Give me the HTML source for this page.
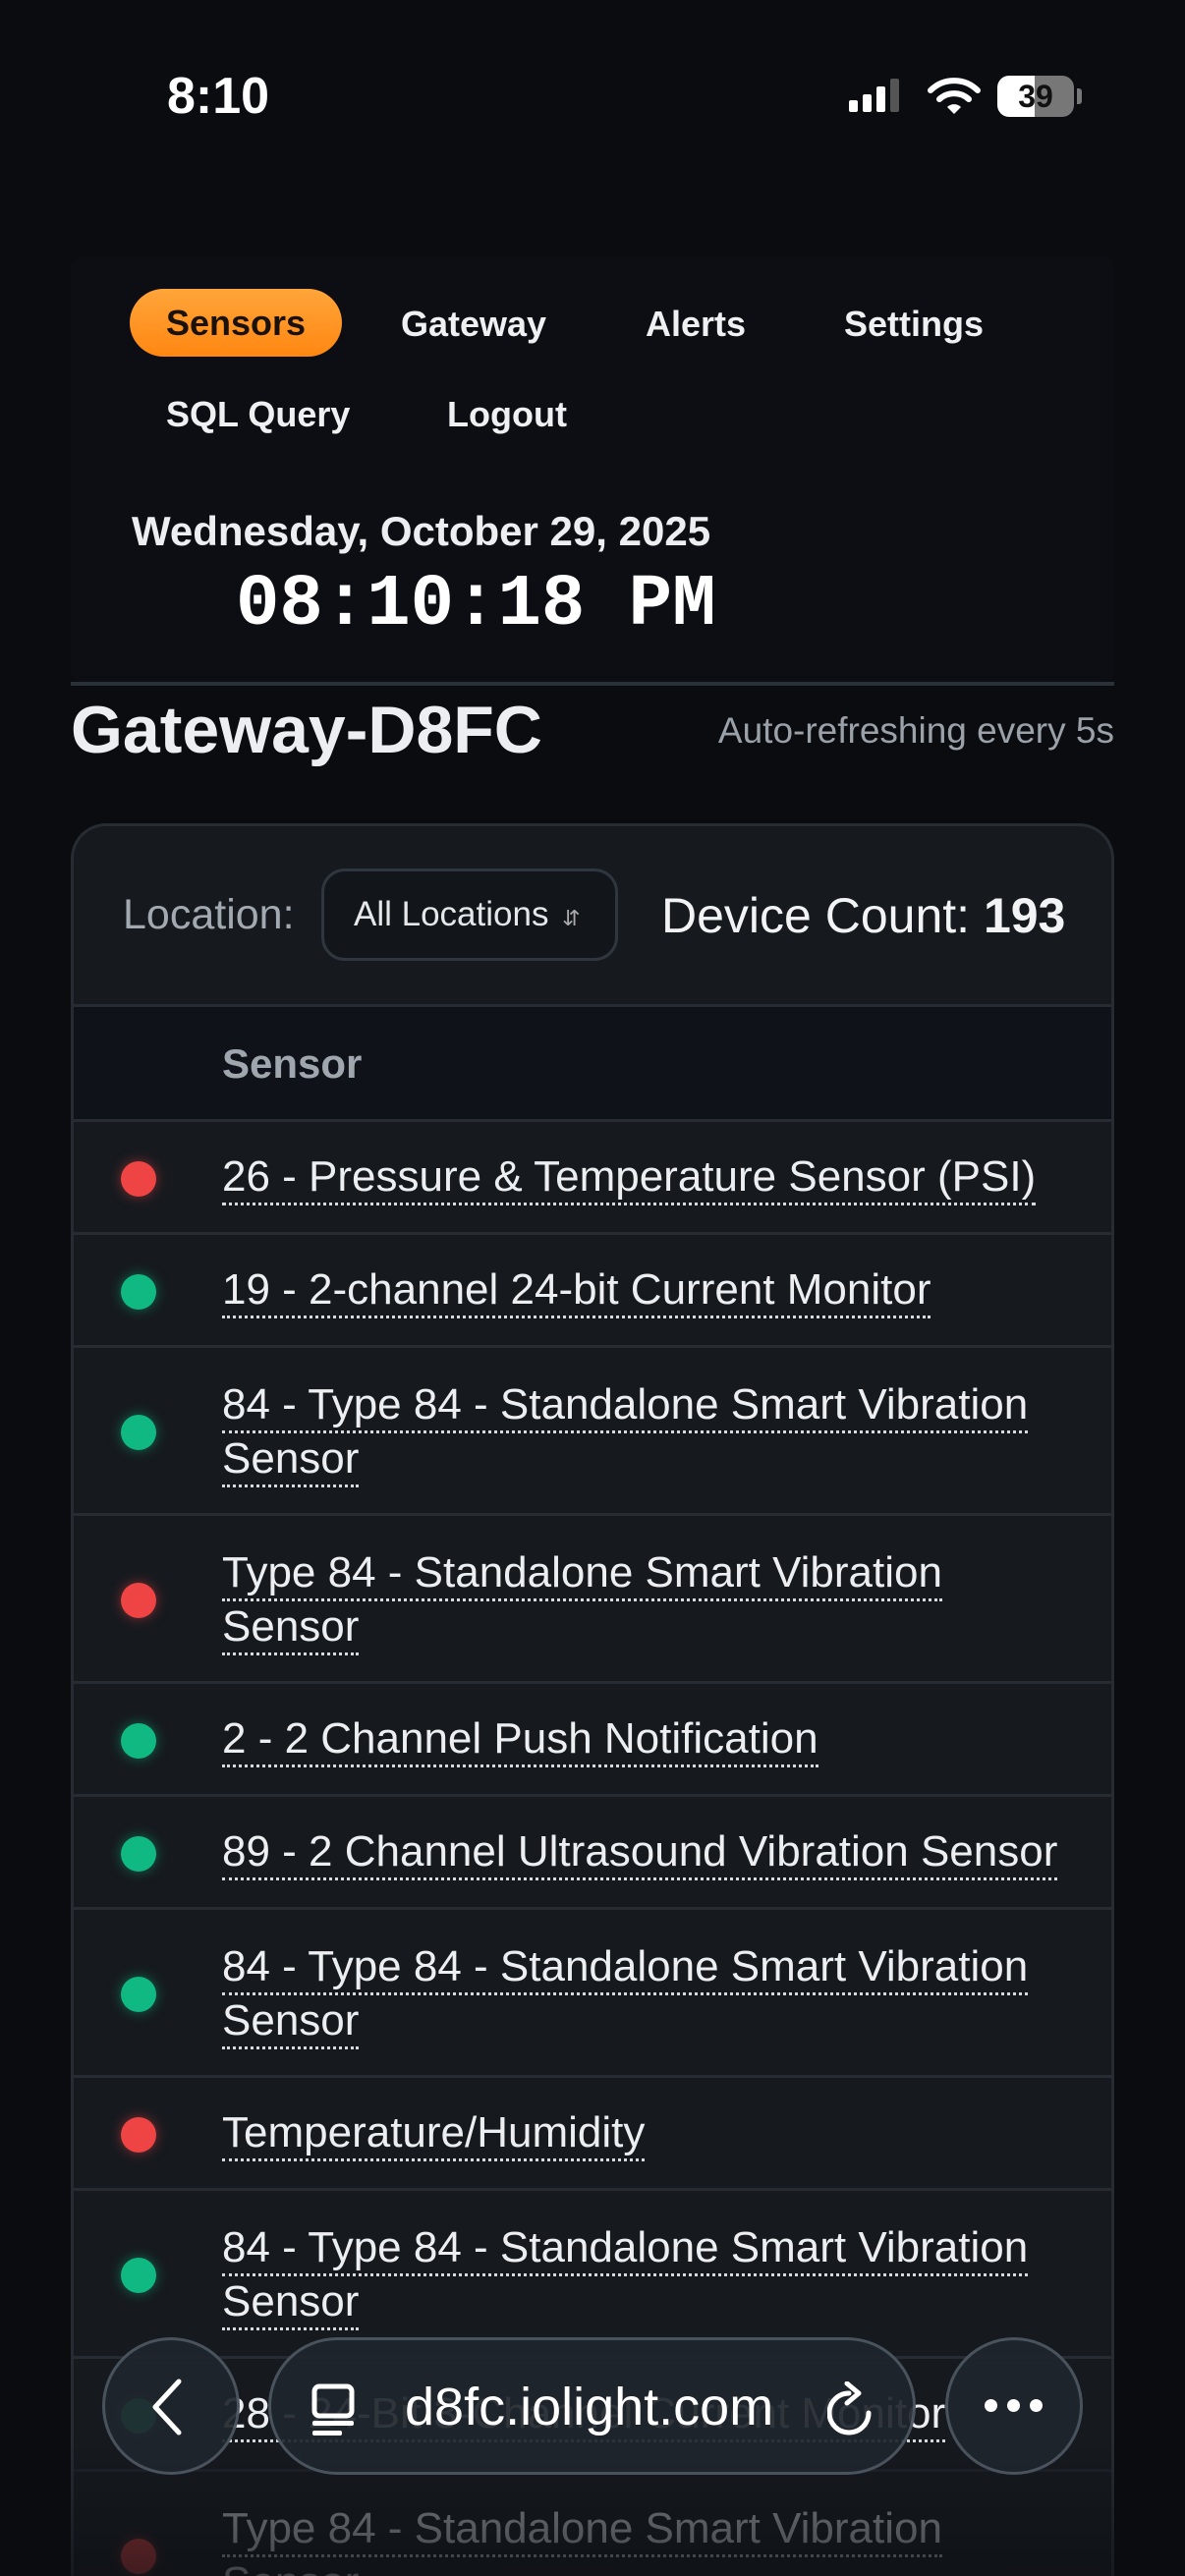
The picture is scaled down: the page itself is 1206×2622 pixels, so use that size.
<!DOCTYPE html>
<html><head><meta charset="utf-8"><style>
*{margin:0;padding:0;box-sizing:border-box}
html,body{width:1206px;height:2622px;overflow:hidden;background:#0a0c10;font-family:"Liberation Sans",sans-serif;color:#e9ebee}
body{position:relative}
.abs{position:absolute}
.nav{position:absolute;left:72px;top:262px;width:1062px;height:432px;background:#0c0e13;border-radius:10px}
.pill{position:absolute;left:132px;top:294px;width:216px;height:69px;border-radius:35px;background:linear-gradient(180deg,#ffa53a,#ff8712);color:#1a1208;font-weight:bold;font-size:36px;line-height:69px;text-align:center}
.nl{position:absolute;font-weight:bold;font-size:36px;color:#eef0f2;line-height:40px}
.card{position:absolute;left:72px;top:838px;width:1062px;height:1784px;background:#161a1f;border:3px solid #272c33;border-bottom:none;border-radius:36px 36px 0 0;overflow:hidden}
.row{position:relative;border-top:3px solid #272c33;height:115px}
.row.d{height:171px}
.dot{position:absolute;left:48px;width:36px;height:36px;border-radius:50%}
.g{background:#10b981;box-shadow:0 0 12px rgba(16,185,129,.5)}
.r{background:#ef4444;box-shadow:0 0 12px rgba(239,68,68,.5)}
.t{position:absolute;left:151px;font-size:44px;line-height:55px;color:#eceef1;width:880px}
.t span{border-bottom:3px dotted #d8dade;padding-bottom:2px}
.btn{position:absolute;top:2379px;height:140px;background:rgba(32,37,44,.92);border:3px solid rgba(110,122,135,.55);border-radius:70px}
</style></head><body>
<div class="abs" style="left:170px;top:68px;font-size:52px;font-weight:bold;color:#fff">8:10</div>
<svg class="abs" style="left:862px;top:80px" width="60" height="36"><rect x="2" y="22" width="9" height="12" rx="2" fill="#fff"/><rect x="16" y="16" width="9" height="18" rx="2" fill="#fff"/><rect x="30" y="8" width="9" height="26" rx="2" fill="#fff"/><rect x="44" y="0" width="9" height="34" rx="2" fill="#555"/></svg>
<svg class="abs" style="left:944px;top:78px" width="54" height="40" viewBox="0 0 54 40"><path d="M3 14 A34 34 0 0 1 51 14" stroke="#fff" stroke-width="6" fill="none" stroke-linecap="round"/><path d="M12 23 A22 22 0 0 1 42 23" stroke="#fff" stroke-width="6" fill="none" stroke-linecap="round"/><path d="M20 31 L27 38 L34 31 A10 10 0 0 0 20 31Z" fill="#fff"/></svg>
<div class="abs" style="left:1015px;top:77px;width:78px;height:42px;border-radius:12px;background:linear-gradient(90deg,#fff 0,#fff 38px,#777 38px);color:#111;font-weight:bold;font-size:32px;line-height:42px;text-align:center">39</div>
<div class="abs" style="left:1096px;top:90px;width:5px;height:16px;border-radius:0 3px 3px 0;background:#777"></div>

<div class="nav"></div>
<div class="pill">Sensors</div>
<div class="nl" style="left:408px;top:310px">Gateway</div>
<div class="nl" style="left:657px;top:310px">Alerts</div>
<div class="nl" style="left:859px;top:310px">Settings</div>
<div class="nl" style="left:169px;top:402px">SQL Query</div>
<div class="nl" style="left:455px;top:402px">Logout</div>
<div class="abs" style="left:134px;top:517px;font-size:42px;font-weight:bold;color:#eceef1">Wednesday, October 29, 2025</div>
<div class="abs" style="left:240px;top:572px;font-family:'Liberation Mono',monospace;font-size:74px;font-weight:bold;color:#fff;line-height:88px">08:10:18 PM</div>
<div class="abs" style="left:72px;top:694px;width:1062px;height:4px;background:#2b3139"></div>
<div class="abs" style="left:72px;top:704px;font-size:68px;font-weight:bold;color:#eceef1;line-height:78px">Gateway-D8FC</div>
<div class="abs" style="right:72px;top:722px;font-size:37px;color:#9ba1a9;line-height:44px">Auto-refreshing every 5s</div>

<div class="card">
 <div style="height:181px;position:relative">
  <div class="abs" style="left:50px;top:66px;font-size:43px;color:#a3a9b0">Location:</div>
  <div class="abs" style="left:252px;top:43px;width:302px;height:94px;border:3px solid #30363e;border-radius:24px;background:#12161b;font-size:35px;line-height:88px;padding-left:30px;color:#e5e7ea;white-space:nowrap">All Locations <span style="font-size:22px;color:#aaa;margin-left:4px">&#8693;</span></div>
  <div class="abs" style="left:598px;top:62px;font-size:50px;color:#f2f3f5;white-space:nowrap">Device Count: <b>193</b></div>
 </div>
 <div class="row" style="background:#0f1319;height:117px"><div class="abs" style="left:151px;top:34px;font-size:42px;font-weight:bold;color:#a0a6ae">Sensor</div></div>
 <div class="row"><div class="dot r" style="top:40px"></div><div class="t" style="top:28px"><span>26 - Pressure &amp; Temperature Sensor (PSI)</span></div></div>
 <div class="row"><div class="dot g" style="top:40px"></div><div class="t" style="top:28px"><span>19 - 2-channel 24-bit Current Monitor</span></div></div>
 <div class="row d"><div class="dot g" style="top:68px"></div><div class="t" style="top:30px"><span>84 - Type 84 - Standalone Smart Vibration Sensor</span></div></div>
 <div class="row d"><div class="dot r" style="top:68px"></div><div class="t" style="top:30px;width:800px"><span>Type 84 - Standalone Smart Vibration Sensor</span></div></div>
 <div class="row"><div class="dot g" style="top:40px"></div><div class="t" style="top:28px"><span>2 - 2 Channel Push Notification</span></div></div>
 <div class="row"><div class="dot g" style="top:40px"></div><div class="t" style="top:28px"><span>89 - 2 Channel Ultrasound Vibration Sensor</span></div></div>
 <div class="row d"><div class="dot g" style="top:68px"></div><div class="t" style="top:30px"><span>84 - Type 84 - Standalone Smart Vibration Sensor</span></div></div>
 <div class="row"><div class="dot r" style="top:40px"></div><div class="t" style="top:28px"><span>Temperature/Humidity</span></div></div>
 <div class="row d"><div class="dot g" style="top:68px"></div><div class="t" style="top:30px"><span>84 - Type 84 - Standalone Smart Vibration Sensor</span></div></div>
 <div class="row"><div class="dot g" style="top:40px"></div><div class="t" style="top:28px"><span>28 - 24-Bit 3-Channel Current Monitor</span></div></div>
 <div class="row d" style="opacity:.5"><div class="dot r" style="top:68px"></div><div class="t" style="top:30px;width:800px"><span>Type 84 - Standalone Smart Vibration Sensor</span></div></div>
</div>
<div class="abs" style="left:0;top:2480px;width:1206px;height:142px;background:linear-gradient(180deg,rgba(10,12,16,0),rgba(10,12,16,.55))"></div>

<div class="btn" style="left:104px;width:140px"></div>
<svg class="abs" style="left:150px;top:2420px" width="40" height="60"><path d="M32 4 L8 30 L32 56" stroke="#fff" stroke-width="5" fill="none" stroke-linecap="round" stroke-linejoin="round"/></svg>
<div class="btn" style="left:273px;width:659px"></div>
<svg class="abs" style="left:316px;top:2426px" width="48" height="56"><rect x="4" y="3" width="38" height="30" rx="5" stroke="#fff" stroke-width="5" fill="none"/><rect x="2" y="38" width="42" height="5" rx="2" fill="#fff"/><rect x="2" y="48" width="30" height="5" rx="2" fill="#fff"/></svg>
<div class="abs" style="left:412px;top:2418px;font-size:54px;color:#fff;line-height:64px">d8fc.iolight.com</div>
<svg class="abs" style="left:842px;top:2424px" width="50" height="60"><path d="M22 12 A20 20 0 1 0 42 32" stroke="#fff" stroke-width="5" fill="none" stroke-linecap="round"/><path d="M20 2 L32 12 L20 22" stroke="#fff" stroke-width="5" fill="none" stroke-linecap="round" stroke-linejoin="round"/></svg>
<div class="btn" style="left:962px;width:140px"></div>
<div class="abs" style="left:1002px;top:2442px;width:60px;height:14px"><i style="position:absolute;left:0;width:13px;height:13px;border-radius:50%;background:#fff"></i><i style="position:absolute;left:23px;width:13px;height:13px;border-radius:50%;background:#fff"></i><i style="position:absolute;left:46px;width:13px;height:13px;border-radius:50%;background:#fff"></i></div>
</body></html>
